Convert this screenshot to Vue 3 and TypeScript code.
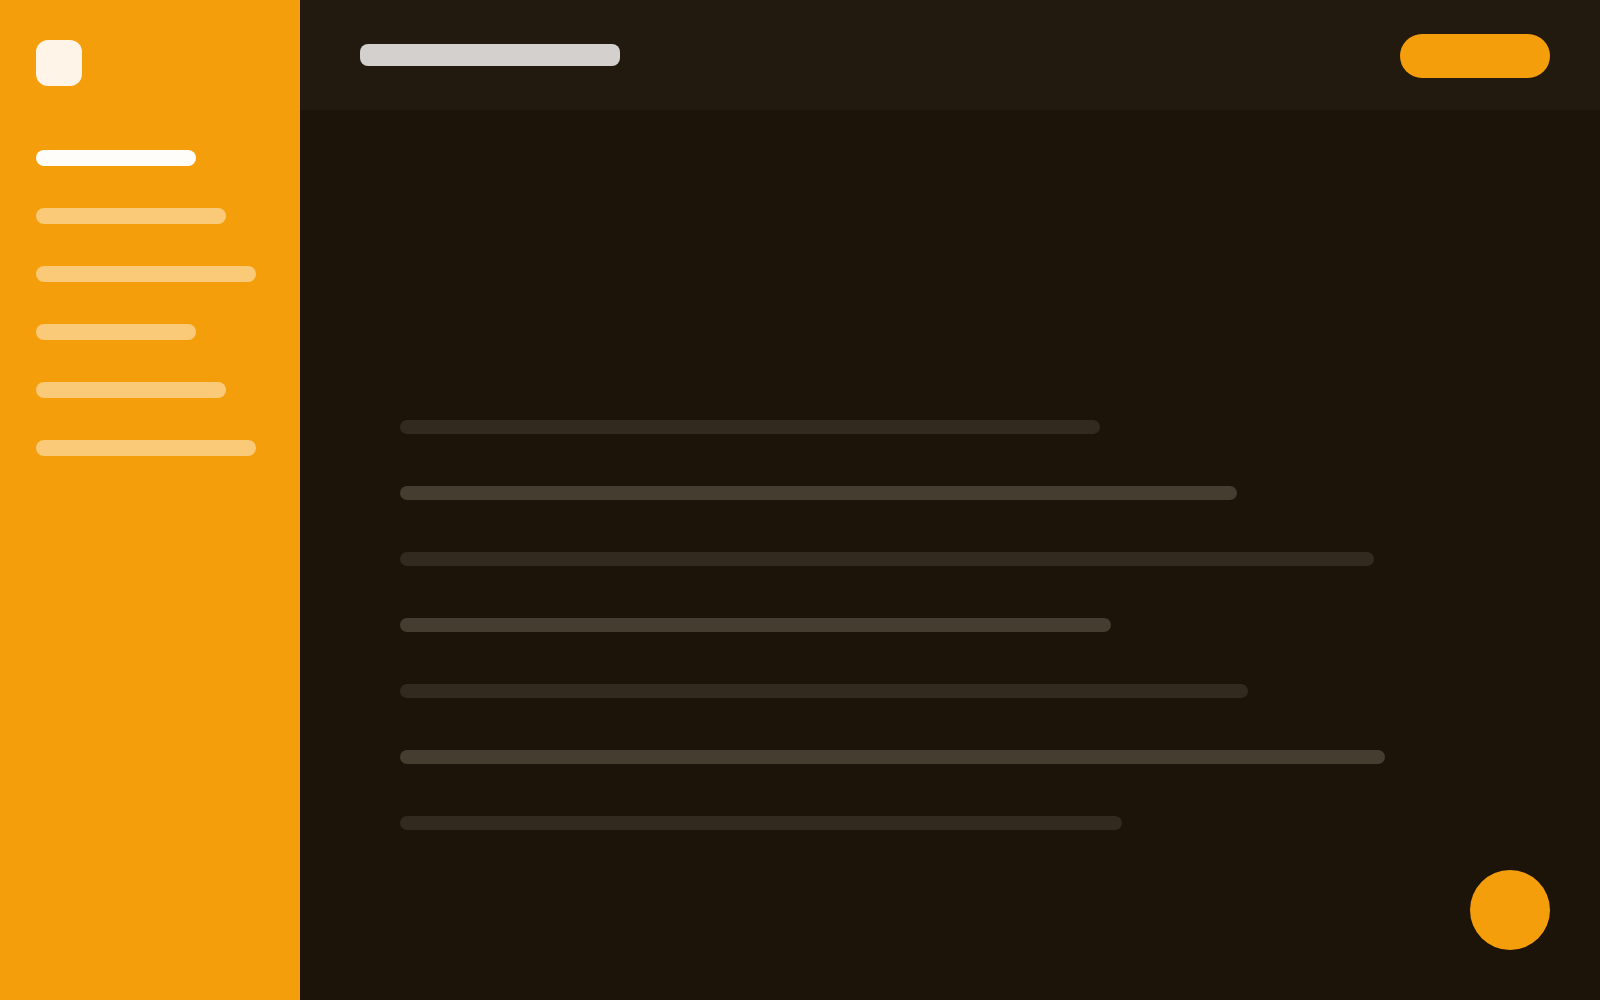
<script setup lang="ts">
interface NavItem {
  id: number
  size: 'short' | 'medium' | 'long'
  active: boolean
}

interface Line {
  id: number
  width: number
  strong: boolean
}

const navItems: NavItem[] = [
  { id: 1, size: 'short', active: true },
  { id: 2, size: 'medium', active: false },
  { id: 3, size: 'long', active: false },
  { id: 4, size: 'short', active: false },
  { id: 5, size: 'medium', active: false },
  { id: 6, size: 'long', active: false },
]

const lines: Line[] = [
  { id: 1, width: 70, strong: false },
  { id: 2, width: 83.7, strong: true },
  { id: 3, width: 97.4, strong: false },
  { id: 4, width: 71.1, strong: true },
  { id: 5, width: 84.8, strong: false },
  { id: 6, width: 98.5, strong: true },
  { id: 7, width: 72.2, strong: false },
]
</script>

<template>
  <div class="shell">
    <aside class="sidebar">
      <div class="logo"></div>
      <nav class="nav">
        <a
          v-for="item in navItems"
          :key="item.id"
          href="#"
          class="nav-item"
          :class="[item.size, { active: item.active }]"
        ></a>
      </nav>
    </aside>
    <div class="content">
      <header class="topbar">
        <div class="title"></div>
        <button type="button" class="action"></button>
      </header>
      <main class="lines">
        <div
          v-for="line in lines"
          :key="line.id"
          class="line"
          :class="{ strong: line.strong }"
          :style="{ width: line.width + '%' }"
        ></div>
      </main>
    </div>
    <button type="button" class="fab"></button>
  </div>
</template>

<style>
body {
  margin: 0;
  background: #1c1408;
}
</style>

<style scoped>
.shell {
  display: flex;
  min-height: 100vh;
  background: #1c1408;
  font-family: Inter, sans-serif;
}

.sidebar {
  flex: 0 0 300px;
  box-sizing: border-box;
  padding: 40px 36px;
  background: #f59e0b;
}

.logo {
  width: 46px;
  height: 46px;
  border-radius: 12px;
  background: #fff4e7;
}

.nav {
  display: flex;
  flex-direction: column;
  gap: 42px;
  margin-top: 64px;
}

.nav-item {
  height: 16px;
  border-radius: 8px;
  background: #faca79;
}

.nav-item.active {
  background: #fffdfa;
}

.short {
  width: 160px;
}

.medium {
  width: 190px;
}

.long {
  width: 220px;
}

.content {
  flex: 1;
  min-width: 0;
}

.topbar {
  display: flex;
  justify-content: space-between;
  align-items: flex-start;
  padding: 34px 50px 32px 60px;
  background: #231a0f;
}

.title {
  width: 260px;
  height: 22px;
  margin-top: 10px;
  border-radius: 8px;
  background: #d3d0cd;
}

.action {
  width: 150px;
  height: 44px;
  padding: 0;
  border: 0;
  border-radius: 22px;
  background: #f59e0b;
  cursor: pointer;
}

.lines {
  display: flex;
  flex-direction: column;
  gap: 52px;
  padding: 310px 200px 100px 100px;
}

.line {
  height: 14px;
  border-radius: 7px;
  background: #332a1f;
}

.line.strong {
  background: #463d31;
}

.fab {
  position: fixed;
  right: 50px;
  bottom: 50px;
  width: 80px;
  height: 80px;
  padding: 0;
  border: 0;
  border-radius: 50%;
  background: #f59e0b;
  cursor: pointer;
}
</style>
